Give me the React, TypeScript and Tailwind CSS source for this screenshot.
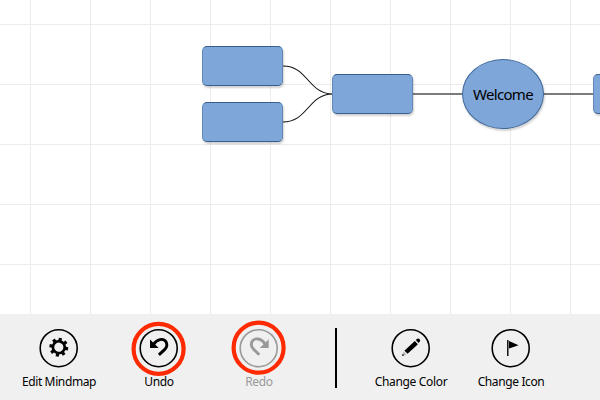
import type { ReactNode } from "react";

type ActionProps = {
  label: string;
  children: ReactNode;
  ring?: "undo" | "redo";
  muted?: boolean;
  tracking?: string;
};

function Action({ label, children, ring, muted, tracking = "" }: ActionProps) {
  return (
    <button
      className={`flex w-[100px] flex-col items-center ${muted ? "text-[#999999]" : "text-black"}`}
    >
      <svg className="block h-[40px] w-[40px] overflow-visible" viewBox="0 0 40 40" fill="none">
        {ring && (
          <circle cx="19.6" cy={ring === "undo" ? 20.9 : 19.7} r="25" stroke="#ff2a00" strokeWidth="4.2" />
        )}
        <circle cx="19.7" cy="20.2" r="18.5" stroke="currentColor" strokeWidth="1.6" />
        {children}
      </svg>
      <span className={`mt-[5px] whitespace-nowrap text-[12px] leading-[18px] ${tracking}`}>{label}</span>
    </button>
  );
}

function Node({ className }: { className: string }) {
  return (
    <div
      className={`absolute h-[40px] w-[81px] rounded-[5px] border border-[#6288b8] border-y-[#356090] bg-[#7ea6d8] shadow-[1px_2px_2px_rgba(0,0,0,0.18)] ${className}`}
    />
  );
}

const teeth = [0, 45, 90, 135, 180, 225, 270, 315];
const columns = [30, 90, 150, 210, 270, 330, 390, 450, 510, 570];
const rows = [24, 84, 144, 204, 264];

export default function App() {
  return (
    <div className="flex h-[400px] w-[600px] flex-col overflow-hidden bg-white font-['Noto_Sans','Open_Sans',sans-serif]">
      <main className="relative h-[314px] shrink-0 overflow-hidden">
        <svg className="absolute inset-0" width="600" height="314" fill="none">
          <g stroke="#ececec" shapeRendering="crispEdges">
            {columns.map((x) => (
              <path key={x} d={`M${x + 0.5} 0V314`} />
            ))}
            {rows.map((y) => (
              <path key={y} d={`M0 ${y + 0.5}H600`} />
            ))}
          </g>
          <path
            d="M283 66C308 66 308 94 333 94M283 122C308 122 308 94 333 94"
            stroke="#111"
            strokeWidth="1.1"
          />
          <path d="M413 94H463M543 94H594" stroke="#7b7b7b" strokeWidth="2" />
        </svg>
        <Node className="left-[202px] top-[46px]" />
        <Node className="left-[202px] top-[102px]" />
        <Node className="left-[332px] top-[74px]" />
        <Node className="left-[593px] top-[74px]" />
        <div className="absolute left-[462px] top-[59px] flex h-[70px] w-[82px] items-center justify-center rounded-[50%] border border-[#41699b] bg-[#7ea6d8] text-[15px] leading-[20px] tracking-[-0.7px] text-black shadow-[1px_2px_2px_rgba(0,0,0,0.18)]">
          Welcome
        </div>
      </main>
      <footer className="flex h-[86px] shrink-0 items-start bg-[#f0f0f0] pl-[9px] pt-[14px]">
        <Action label="Edit Mindmap" tracking="tracking-[-0.38px]">
          <g transform="rotate(10 19.8 19.2)">
            <circle cx="19.8" cy="19.2" r="5.9" stroke="currentColor" strokeWidth="2.6" />
            {teeth.map((angle) => (
              <rect
                key={angle}
                x="18.2"
                y="9.8"
                width="3.2"
                height="4"
                fill="currentColor"
                transform={`rotate(${angle} 19.8 19.2)`}
              />
            ))}
          </g>
        </Action>
        <Action label="Undo" ring="undo" tracking="tracking-[-0.3px]">
          <path d="M11 11.5V20H19.7Z" fill="currentColor" />
          <path d="M14.5 16.6C17.6 10.9 24.6 9.8 27 13.8C28.4 16.3 27.9 19.2 25.8 21.4L19.9 26.9" stroke="currentColor" strokeWidth="2.9" />
        </Action>
        <Action label="Redo" ring="redo" muted tracking="tracking-[-0.3px]">
          <path d="M29.7 11.2V20H20.8Z" fill="currentColor" />
          <path d="M26.1 16.2C22.8 10.1 15.5 9.4 13.2 13.3C11.8 15.8 12.3 18.9 14.4 21.1L20.3 26.7" stroke="currentColor" strokeWidth="2.9" />
        </Action>
        <div className="ml-[26px] mr-[24px] h-[60px] w-[2px] bg-black" />
        <Action label="Change Color" tracking="tracking-[-0.33px]">
          <g fill="currentColor" transform="translate(.2 0)">
            <path d="M13.2 22.7L23.6 13L26.7 16.3L16.4 25.8Z" />
            <path d="M24.6 12L26 10.7Q27.4 10.2 28.5 11.3Q29.4 12.5 28.6 13.6L27.3 15Z" />
            <path d="M12.3 23.6L15.3 26.4L10.9 28Z" opacity=".25" />
            <path d="M11.5 25.9L13 27.3L10.8 28Z" />
          </g>
        </Action>
        <Action label="Change Icon" tracking="tracking-[-0.38px]">
          <path d="M16.1 12H17.5V28H16.1Z" fill="currentColor" />
          <path d="M18 13L27.6 17.3L18 20.6Z" fill="currentColor" />
        </Action>
      </footer>
    </div>
  );
}
